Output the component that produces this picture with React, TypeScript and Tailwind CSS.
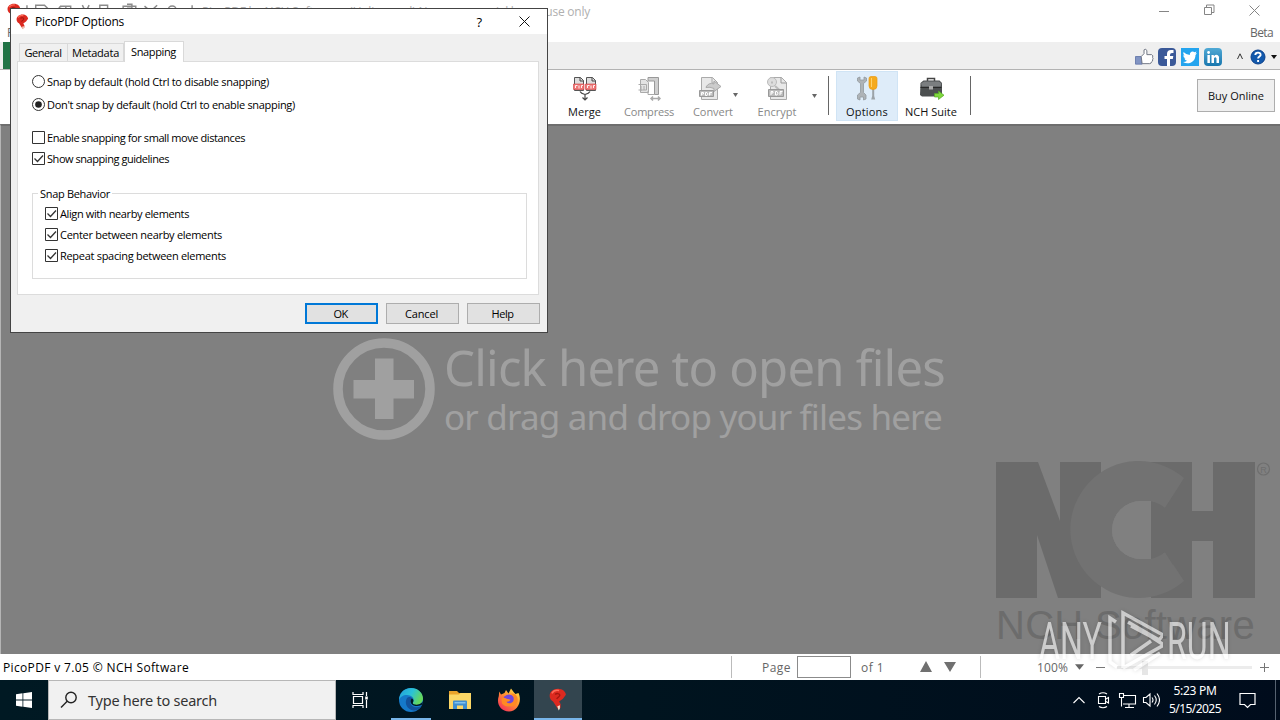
// src/App.tsx
import React, { useLayoutEffect, useRef, useState } from 'react';

interface LabelProps {
  w: number;
  className?: string;
  children: string;
}

// Single line of text, tracked so that it fills exactly `w` pixels
const Label: React.FC<LabelProps> = ({ w, className = '', children }) => {
  const ref = useRef<HTMLSpanElement>(null);
  const [spacing, setSpacing] = useState(0);

  useLayoutEffect(() => {
    if (!ref.current) return;
    const natural = ref.current.getBoundingClientRect().width;
    setSpacing((w - natural) / children.length);
  }, [w, children]);

  return (
    <span className={`block shrink-0 whitespace-pre ${className}`} style={{ width: w }}>
      <span ref={ref} className="inline-block" style={{ letterSpacing: spacing }}>
        {children}
      </span>
    </span>
  );
};

const PicoLogo: React.FC<{ className?: string }> = ({ className }) => (
  <svg viewBox="0 0 16 20" className={className}>
    <path d="M8 .5C3.600.5.6 3.200.6 6.800c0 2.200 1.200 3.900 3 4.900l2.600 4 1.800 2.800 2.200-1 .2-3.200-1.400-2.500 3.400-2.500 2.600-3.500C14.800 3 12 .5 8 .5z" fill="#dc2a20" />
    <path d="M5.500 5.500c1.200-1.200 3.900-.9 4.100.6.1 1.300-1.700 1.900-2.800 3.400" fill="none" stroke="#a5170f" strokeWidth="1.300" />
    <path d="M2.500 4.500C4 2 7 1.500 9 2" fill="none" stroke="#ff6a58" strokeWidth="1.400" />
    <path d="M7.400 16l2.400-.8-.2 3-1 1.600z" fill="#f4e2cf" />
  </svg>
);

const TitleBar = () => (
  <div className="flex h-6 shrink-0 items-start justify-between bg-white">
    <div className="flex h-6 items-center pl-[7px] text-[#858585]">
      <PicoLogo className="mr-[5px] h-[18px] w-[14px]" />
      <svg viewBox="0 0 175 20" className="h-5 w-[170px]" fill="none" stroke="#8b8b8b" strokeWidth="1.500">
        <path d="M1 3v14M10 7V3h9l4 4v10H10zM35 4h11v13M41 4v13M37 4c-4 0-4 6 0 6h4M58 3l7 14M65 3l-7 14M76 3h8v11h-8zM81 7h8v10h-8M100 4h13v13h-13zM104 2h5v4h-5M122 4l14 12M135 3l-13 12M146 9c0-7 9-7 9 0s-9 7-9 0M154 13l4 4M171 3v14" />
      </svg>
      <Label w={388} className="ml-[6px] text-[12px] text-[#b0b0b0]">
        PicoPDF by NCH Software - (Unlicensed) Non-commercial home use only
      </Label>
    </div>
    <svg viewBox="0 0 110 22" className="mr-[13px] h-[22px] w-[110px]" fill="none" stroke="#858585" strokeWidth="1">
      <path d="M2 11.500h10M47.500 7.500h7v7h-7zM49.500 7v-2h7.500v7.500h-2M92.500 5.500l10 10M102.500 5.500l-10 10" />
    </svg>
  </div>
);

const SocialBar = () => (
  <div className="flex h-7 shrink-0 items-center border-b border-[#b3b3b3] bg-[#efefef] pl-[3px]">
    <div className="h-full w-[62px] bg-[#217346]" />
    <div className="mt-[2px] ml-auto flex items-center">
      <svg viewBox="0 0 20 20" className="mr-[4px] h-5 w-[19px]">
        <path d="M.5 9.500h7v8h-7z" fill="#8194c3" stroke="#687bac" />
        <path d="M6.500 9.500l3-3V2.500q2-2 3 1v4h5q2 1 1 3 1 1 0 2.500.500 1.500-1 2-.5 2-2 2h-8z" fill="#fff" stroke="#6c7280" />
      </svg>
      <div className="mr-[5px] h-[18px] w-[18px] rounded-sm bg-[#3b5998]">
        <svg viewBox="0 0 18 18"><path d="M9 18v-7H6.500V8H9V6q0-4 4-4h2.500v3H14q-2 0-2 2v1h3.300l-.5 3H12v7z" fill="#fff" /></svg>
      </div>
      <div className="mr-[5px] h-[18px] w-[18px] bg-[#24a4ee]">
        <svg viewBox="0 0 18 18"><path d="M2.500 4q3 3 6.300 3C8.500 3.500 12 2.500 13.500 4.300l2-.8-1 2 1.500-.3-1.500 1.800c0 7-7 10.300-12.500 7q2.500 0 4-1.200-2-.4-2.700-2.300h1.200Q2.300 9.500 2.200 7.300l1.300.3Q1.600 6 2.500 4z" fill="#fff" /></svg>
      </div>
      <div className="mr-[14px] h-[18px] w-[18px] rounded-sm bg-linear-to-b from-[#4fa9d5] to-[#1777ae]">
        <svg viewBox="0 0 18 18" fill="#fff"><circle cx="4.600" cy="4.500" r="1.400" /><path d="M3.400 7h2.500v8H3.400zM7.500 7h2.300v1.200q3.200-3 5.200.5V15h-2.500v-4.500q-1-2.500-2.500-.3V15H7.500z" /></svg>
      </div>
      <svg viewBox="0 0 8 8" className="mr-[6px] h-2 w-2" fill="none" stroke="#333"><path d="M1.500 6L4 .8 6.500 6" /></svg>
      <svg viewBox="0 0 16 16" className="h-4 w-4">
        <circle cx="8" cy="8" r="7" fill="#1259ac" stroke="#0b408b" />
        <path d="M5.300 6c.2-3.400 5.700-3 5.300 0-.3 1.600-2.500 1.500-2.500 3.600M8.100 11v2" fill="none" stroke="#fff" strokeWidth="1.900" />
      </svg>
      <svg viewBox="0 0 6 4" className="mr-[3px] ml-[5px] h-1 w-[6px]"><path d="M0 0h6L3 4z" fill="#111" /></svg>
    </div>
  </div>
);

const MergeIcon = () => (
  <svg viewBox="0 0 24 25" className="h-[25px] w-6">
    <g fill="#ddd" stroke="#555">
      <path d="M1.500 1.500h6l3 3v10h-9z" /><path d="M13.500 1.500h6l3 3v10h-9z" />
    </g>
    <path d="M7 1.500v3.500h3.500M19 1.500v3.500h3.500" fill="none" stroke="#444" />
    <path d="M.5 8h10.500v5.500H.5zM12.500 8H23v5.500H12.500z" fill="#ef7777" stroke="#cc3f42" strokeWidth=".6" />
    <path d="M2.500 12V9.500h2M6 9.500v3M8.500 12V9.500h1.500M14.500 12V9.500h2M18 9.500v3M20.500 12V9.500h1.500" fill="none" stroke="#fff" strokeWidth=".9" />
    <path d="M7 15.500q1 2 5 3 4-1 5-3M12 18.500V24M9.500 21.500L12 24l2.500-2.500" fill="none" stroke="#474747" strokeWidth="1.200" />
  </svg>
);

const CompressIcon = () => (
  <svg viewBox="0 0 24 25" className="h-[25px] w-6">
    <path d="M3.500 3.500h5l3 3v10h-8z" fill="#e3e3e3" stroke="#aaa" />
    <path d="M1.500 8.500h8V14h-8M4 10v5M7 10v4" fill="none" stroke="#aaa" />
    <path d="M11 1.500h10.500v17H17.500V5H11z" fill="#cfcfcf" stroke="#999" />
    <path d="M11 15v3.500h6.500" fill="none" stroke="#aaa" />
    <path d="M14 22.500h9M16 20.500l-2 2 2 2M21 20.500l2 2-2 2" fill="none" stroke="#aaa" strokeWidth="1.500" />
  </svg>
);

const ConvertIcon = () => (
  <svg viewBox="0 0 24 25" className="h-[25px] w-6">
    <path d="M2.500 1.500h11l5 5v17h-16z" fill="#e8e8e8" stroke="#aaa" />
    <path d="M13 1.500V7h5.500" fill="none" stroke="#aaa" />
    <path d="M7 11q3-5 8-3V5l7 5.500-7 5v-3q-4-2-8-1z" fill="#ccc" stroke="#aaa" />
    <path d="M.5 14.500h14v6H.5z" fill="#bbb" stroke="#999" />
    <path d="M2.500 19.500v-3h2v1.500h-2M6.500 16.500v3h1.500q2-1.500 0-3zM10.500 19.500v-3h2.500M10.500 18h2" fill="none" stroke="#fff" />
  </svg>
);

const EncryptIcon = () => (
  <svg viewBox="0 0 24 25" className="h-[25px] w-6">
    <path d="M4.500 1.500h11l5 5v17h-16z" fill="#e8e8e8" stroke="#aaa" />
    <path d="M15 1.500V7h5.500" fill="none" stroke="#999" />
    <circle cx="6" cy="6" r="4.500" fill="#ddd" stroke="#bbb" />
    <path d="M6 5.500v2M9 10l5 4.500" stroke="#bbb" strokeWidth="2" />
    <path d="M2.500 13.500h15v7h-15z" fill="#bbb" stroke="#999" />
    <path d="M5 19v-3.500h2V17H5M9.500 15.500V19H11q2-2 0-3.500zM14 19v-3.500h2.500M14 17h2" fill="none" stroke="#fff" />
  </svg>
);

const OptionsIcon = () => (
  <svg viewBox="0 0 24 25" className="h-[25px] w-6">
    <path d="M2.500 2v3l3 2.500v9l-3 2.500v4l2.500 1v-3h3.500v3l2.500-1v-4L8.500 16.500v-9l3-2.500V2L9 1v3H5V1z" fill="#aeb3b7" stroke="#92999e" strokeWidth=".8" />
    <path d="M17.200 13h2v7l1 3.500h-4l1-3.500z" fill="#9ca3a8" />
    <path d="M14 2.500q0-2 2-2h4q2 0 2 2V10q0 3.500-4 3.500T14 10z" fill="#f5aa1d" stroke="#e99b12" strokeWidth=".7" />
    <path d="M16.500 2v9" stroke="#ffd16b" />
  </svg>
);

const SuiteIcon = () => (
  <svg viewBox="0 0 25 25" className="h-[25px] w-[25px]">
    <path d="M8.500 5V2.500h7V5" fill="none" stroke="#444" strokeWidth="1.500" />
    <path d="M1.500 7l3-2.500h16L23 7v12l-2 1.500H3L1 19z" fill="#4c4f50" />
    <path d="M2 7.500l3-2h15l2.500 2-1 3H3z" fill="#7b7e80" />
    <path d="M1.500 11.500h21" stroke="#292929" />
    <path d="M10 10h4v3.500h-4z" fill="#aaa" />
    <path d="M15.500 17.500h4V15l5.500 4.200-5.500 4.300v-2.500h-4z" fill="#7fd83c" stroke="#55a727" strokeWidth=".7" />
  </svg>
);

interface ToolButtonProps {
  icon: React.ReactNode;
  label: string;
  labelWidth: number;
  className: string;
  disabled?: boolean;
}

const ToolButton: React.FC<ToolButtonProps> = ({ icon, label, labelWidth, className, disabled }) => (
  <div className={`flex h-[50px] flex-col items-center pt-[5px] ${className}`}>
    {icon}
    <Label w={labelWidth} className={`mt-[3px] text-[11px] leading-4 ${disabled ? 'text-[#888]' : 'text-[#111]'}`}>
      {label}
    </Label>
  </div>
);

const DropArrow = ({ className }: { className: string }) => (
  <svg viewBox="0 0 5 4" className={`h-1 w-[5px] shrink-0 ${className}`}><path d="M0 0h5L2.500 4z" fill="#666" /></svg>
);

const Toolbar = () => (
  <div className="flex h-[54px] shrink-0 items-start bg-white pt-px">
    <ToolButton icon={<MergeIcon />} label="Merge" labelWidth={33} className="ml-[553px] w-[63px]" />
    <ToolButton icon={<CompressIcon />} label="Compress" labelWidth={50} className="w-[66px]" disabled />
    <ToolButton icon={<ConvertIcon />} label="Convert" labelWidth={40} className="ml-[7px] w-[48px] [&>svg]:-ml-[4px]" disabled />
    <DropArrow className="mt-[22px] -ml-[4px]" />
    <ToolButton icon={<EncryptIcon />} label="Encrypt" labelWidth={39} className="ml-[16px] w-[46px] [&>svg]:ml-[2px]" disabled />
    <DropArrow className="mt-[23px] ml-[12px]" />
    <div className="mt-[5px] ml-[11px] h-[39px] w-px bg-[#666]" />
    <ToolButton icon={<OptionsIcon />} label="Options" labelWidth={42} className="ml-[7px] w-[62px] bg-[#deecf9] outline outline-[#d0e4f5] -outline-offset-1" />
    <ToolButton icon={<SuiteIcon />} label="NCH Suite" labelWidth={52} className="ml-[2px] w-[62px]" />
    <div className="mt-[5px] ml-[8px] h-[39px] w-px bg-[#666]" />
    <div className="mt-[8px] mr-[5px] ml-auto flex h-[33px] w-[78px] items-center justify-center border border-[#adadad] bg-[#efefef] pt-px">
      <Label w={56} className="text-[11px] text-[#111]">Buy Online</Label>
    </div>
  </div>
);

const NchLogo = () => (
  <div className="flex w-[280px] flex-col">
    <svg viewBox="0 0 280 140" className="h-[140px] w-[280px]">
      <path d="M0 2h42l22 59V2h41v136H62L41 75v63H0zM155 2h41v49h21V2h42v136h-42V81h-21v57h-41z" fill="#6b6b6b" />
      <path d="M188 18A68.500 68.500 0 1 0 188 121L169 92Q156 100 145 99A29 29 0 0 1 145 41Q156 41 169 48z" fill="#727272" />
      <path d="M155 41V99H145A29 29 0 0 1 145 41z" fill="#808080" />
      <path d="M155 41.500q8 1 14 6.500l8-12v69l-8-13q-6 5-14 7z" fill="#6b6b6b" />
      <circle cx="267.500" cy="9" r="6" fill="none" stroke="#6e6e6e" strokeWidth="1.200" />
      <text x="267.500" y="12.500" textAnchor="middle" fontSize="9" fontFamily="Liberation Sans" fill="#6e6e6e">R</text>
    </svg>
    <Label w={259} className="font-['Liberation_Sans',sans-serif] text-[40px] leading-[50px] text-[#6c6c6c]">NCH Software</Label>
  </div>
);

const Canvas = () => (
  <div className="flex h-[530px] shrink-0 flex-col border-t-2 border-l border-t-[#6e6e6e] border-l-[#b5b5b5] bg-[#808080]">
    <div className="mt-[212px] ml-[332px] flex text-[#a0a0a0]">
      <svg viewBox="0 0 102 102" className="h-[102px] w-[102px]" fill="#a0a0a0">
        <circle cx="51" cy="51" r="46" fill="none" stroke="#a0a0a0" strokeWidth="9.500" />
        <path d="M42 20.500h18.500V42H81v18.500H60.500V81H42V60.500H20.500V42H42z" />
      </svg>
      <div className="ml-[9px] font-['Noto_Sans',sans-serif]">
        <Label w={501} className="text-[49px] leading-[58px]">Click here to open files</Label>
        <Label w={498} className="text-[35px] leading-[41px]">or drag and drop your files here</Label>
      </div>
    </div>
    <div className="mt-[20px] ml-[995px]">
      <NchLogo />
    </div>
  </div>
);

const StatusBar = () => (
  <div className="flex h-[26px] shrink-0 items-center bg-white text-[12px] text-[#666]">
    <Label w={186} className="ml-[3px] pt-px text-black">PicoPDF v 7.05 © NCH Software</Label>
    <div className="ml-[542px] h-[22px] w-px bg-[#bbb]" />
    <Label w={29} className="ml-[30px] pt-px">Page</Label>
    <div className="ml-[6px] h-[22px] w-[54px] border border-[#8b8b8b]" />
    <Label w={23} className="ml-[10px] pt-px">of 1</Label>
    <svg viewBox="0 0 38 12" className="ml-[36px] h-3 w-[38px]" fill="#707070"><path d="M0 11h12L6 0zM24 1h12l-6 10z" /></svg>
    <div className="ml-[22px] h-[22px] w-px bg-[#bbb]" />
    <Label w={31} className="ml-[56px] pt-px">100%</Label>
    <svg viewBox="0 0 10 6" className="ml-[7px] h-[6px] w-[9px]"><path d="M0 0h10L5 6z" fill="#666" /></svg>
    <div className="ml-[12px] h-px w-[9px] bg-[#777]" />
    <div className="ml-[12px] h-[3px] w-[135px] bg-[#ececec]">
      <div className="-mt-[5px] ml-[25px] h-[14px] w-[6px] bg-[#e6e6e6]" />
    </div>
    <svg viewBox="0 0 9 9" className="ml-[8px] h-[9px] w-[9px]" stroke="#777"><path d="M0 4.500h9M4.500 0v9" /></svg>
  </div>
);

const EdgeIcon = () => (
  <svg viewBox="0 0 24 24" className="h-6 w-6">
    <defs>
      <linearGradient id="edgeTop" x1="0" y1="0" x2="1" y2="0.400"><stop offset="0" stopColor="#239edb" /><stop offset="0.550" stopColor="#2ac2d8" /><stop offset="1" stopColor="#65d85b" /></linearGradient>
    </defs>
    <circle cx="12" cy="12" r="12" fill="#1579c9" />
    <path d="M.2 10C1.500 3.500 6.300 0 12 0c7 0 12 5 12 10.500 0 4.500-3.800 6.700-7.500 6.500-2.500 0-3.500-1-2.500-2.500C16.500 10 12 7 8 7 4 7 1 9 .2 12z" fill="url(#edgeTop)" />
    <path d="M8 10c-3 5 0 11.500 6.500 12.500 3.500.3 6.500-1.800 8-4.500-5 2.500-10.500 1-11.200-3-.4-2 .7-3.500 2-4.500-1.500-2-4-2-5.300-.5z" fill="#12529b" />
    <path d="M13 10.600c-2.700 2-1.600 6.800 3.500 7.300 3 .4 5.300-.3 6.700-1.300l.6-3c-2 3-6.300 3.800-9 2.700-1.500-.7-1-1.600-.5-2.700.5-1.300-.2-2.400-1.300-3z" fill="#001722" />
  </svg>
);

const ExplorerIcon = () => (
  <svg viewBox="0 0 22 20" className="h-5 w-[22px]">
    <path d="M0 1h8l2 2h12v16H0z" fill="#e9a32b" />
    <path d="M0 4.500h10l1.500-1.500H22v16H0z" fill="#fbd766" />
    <path d="M4 19v-7.500q0-1 1-1h12q1 0 1 1V19h-4v-3.500H8V19z" fill="#3f8fd0" />
    <path d="M5.500 12h11v1.500h-11z" fill="#81c3ee" />
  </svg>
);

const FirefoxIcon = () => (
  <svg viewBox="0 0 24 24" className="h-6 w-6">
    <defs>
      <linearGradient id="fox" x1="1" y1="0" x2="0.200" y2="1"><stop offset="0" stopColor="#fff04b" /><stop offset="0.500" stopColor="#ff9130" /><stop offset="1" stopColor="#f5305b" /></linearGradient>
    </defs>
    <path d="M2.200 3.500L4 6.500 7.500 5l1.500-3 2.500 3.500L14 .5l3 4 1.500 1.500 3-1C25.500 13 20.500 23.500 12 23.500S-1 15.500 1.800 8z" fill="url(#fox)" />
    <circle cx="12" cy="12.500" r="6" fill="#7046dc" />
    <path d="M4.500 11c2-2.500 4-1 6 0l3 .7q-1 2-4 2 1 2 4 1.500 4-1 3-6-1.500-3.500-4-3.200 6-1.800 8 4 1 6-4 8-7 2.500-11.500-2.500z" fill="#ff8a24" />
  </svg>
);

const WindowsIcon = () => (
  <svg viewBox="0 0 16 16" className="h-4 w-4" fill="#fff">
    <path d="M0 2.200l6.500-.9v6.200H0zM7.300 1.200L16 0v7.500H7.300zM0 8.400h6.500v6.300L0 13.800zM7.300 8.400H16V16l-8.700-1.200z" />
  </svg>
);

const Taskbar = () => (
  <div className="flex h-10 shrink-0 items-center bg-linear-to-r from-[#001923] via-[#00141f] to-[#000c1c] text-white">
    <div className="flex w-12 justify-center"><WindowsIcon /></div>
    <div className="flex h-10 w-72 items-center border border-[#b7b7b7] bg-[#f1f1f1] pl-[11px] text-[#333]">
      <svg viewBox="0 0 18 18" className="h-[18px] w-[18px]" fill="none" stroke="#222" strokeWidth="1.400"><circle cx="11" cy="6.500" r="5.200" /><path d="M7.200 10.300L1 16.500" /></svg>
      <Label w={129} className="ml-[10px] pt-[2px] font-['Noto_Sans',sans-serif] text-[14.500px]">Type here to search</Label>
    </div>
    <div className="flex w-12 justify-center">
      <svg viewBox="0 0 17 16" className="h-4 w-[17px]" fill="none" stroke="#fff" strokeWidth="1.200"><path d="M1 0v2.500h10V0M1 16v-2.500h10V16M1.500 4.500h9v7h-9zM14.500 0v4M14.500 8v8" /><path d="M13.200 4.500h2.600v3h-2.600z" fill="#fff" stroke="none" /></svg>
    </div>
    <div className="ml-[7px] flex h-10 w-10 items-center justify-center border-b-2 border-[#78b5e9] pt-[2px]"><EdgeIcon /></div>
    <div className="ml-[8px] flex w-10 items-center justify-center pl-[2px]"><ExplorerIcon /></div>
    <div className="ml-[10px] flex w-10 items-center justify-center"><FirefoxIcon /></div>
    <div className="ml-[5px] flex h-10 w-12 items-center justify-center border-b-2 border-[#78b5e9] bg-[#33454f]"><PicoLogo className="h-[23px] w-[18px]" /></div>
    <div className="ml-auto flex h-10 items-center">
      <svg viewBox="0 0 88 18" className="h-[18px] w-[88px]" fill="none" stroke="#fff" strokeWidth="1.100">
        <path d="M1.500 12L7 6.500l5.500 5.500" />
        <path d="M26.500 5.500h7v7h-7zM34 8l2.500-1.500v5.500L34 10.500M27 3q4-2.500 8 0M27 15.500q4 2.500 8 0" />
        <path d="M51.500 4.500h12v8.500H51M57 13v3M53 16.500h9M47.500 2.500h4v4h-4zM49.500 6.500v9" />
        <path d="M71.500 6.500H74l4-3.500v12l-4-3.500h-2.500zM80 6.500q2 2.500 0 5M82.500 4.500q3.500 4.500 0 9M85 2.500q5 6.500 0 13" />
      </svg>
      <div className="ml-[9px] flex w-[52px] flex-col items-center font-['Noto_Sans',sans-serif] text-[12px] leading-[18px]">
        <Label w={43}>5:23 PM</Label>
        <Label w={52}>5/15/2025</Label>
      </div>
      <svg viewBox="0 0 17 17" className="ml-[18px] h-[17px] w-[17px]" fill="none" stroke="#fff" strokeWidth="1.200"><path d="M1 1.500h15v11h-4.500l-3 3-3-3H1z" /></svg>
      <div className="mr-[4px] ml-[19px] h-10 w-px bg-[#566270]" />
    </div>
  </div>
);

const CheckItem: React.FC<{ w: number; label: string; checked?: boolean }> = ({ w, label, checked }) => (
  <div className="flex h-[21px] items-center">
    <svg viewBox="0 0 13 13" className="mr-[2px] h-[13px] w-[13px]" fill="none" stroke="#333">
      <path d="M.5 .5h12v12H.5z" />
      {checked && <path d="M2.500 6.500l3 3 5.500-6" strokeWidth="1.300" />}
    </svg>
    <Label w={w}>{label}</Label>
  </div>
);

const RadioItem: React.FC<{ w: number; label: string; checked?: boolean }> = ({ w, label, checked }) => (
  <div className="flex h-[23px] items-center">
    <svg viewBox="0 0 13 13" className="mr-[2px] h-[13px] w-[13px]">
      <circle cx="6.500" cy="6.500" r="6" fill="none" stroke="#333" />
      {checked && <circle cx="6.500" cy="6.500" r="3.300" fill="#222" />}
    </svg>
    <Label w={w}>{label}</Label>
  </div>
);

const dialogButton = 'flex h-[21px] w-[73px] items-center justify-center bg-[#e1e1e1] pr-[2px]';

const OptionsDialog = () => (
  <div className="absolute top-2 left-[10px] flex h-[325px] w-[538px] flex-col border border-[#444] bg-[#f0f0f0] text-[11px] leading-4 text-black">
    <div className="flex h-[25px] shrink-0 items-center bg-white pl-[5px]">
      <PicoLogo className="h-[16px] w-[13px]" />
      <Label w={89} className="ml-[6px] text-[12px]">PicoPDF Options</Label>
      <span className="ml-auto text-[13px] font-medium">?</span>
      <svg viewBox="0 0 11 11" className="mr-[17px] ml-[37px] h-[11px] w-[11px]" stroke="#111"><path d="M.5 .5l10 10M10.500 .5l-10 10" /></svg>
    </div>
    <div className="mt-[7px] flex h-5 shrink-0 items-end pl-[8px]">
      <div className="flex h-[18px] w-[49px] items-center justify-center border border-b-0 border-[#d9d9d9] pr-px"><Label w={37}>General</Label></div>
      <div className="flex h-[18px] w-[56px] items-center justify-center border border-b-0 border-l-0 border-[#d9d9d9]"><Label w={47}>Metadata</Label></div>
      <div className="relative z-10 -mb-px flex h-[21px] w-[60px] items-center border border-b-0 border-[#d9d9d9] bg-white pb-px pl-[6px]"><Label w={45}>Snapping</Label></div>
    </div>
    <div className="ml-[6px] h-[234px] w-[522px] shrink-0 border border-[#dcdcdc] bg-white pt-[8px] pl-[14px]">
      <RadioItem w={222} label="Snap by default (hold Ctrl to disable snapping)" />
      <RadioItem w={248} label="Don't snap by default (hold Ctrl to enable snapping)" checked />
      <div className="mt-[11px]">
        <CheckItem w={198} label="Enable snapping for small move distances" />
        <CheckItem w={122} label="Show snapping guidelines" checked />
      </div>
      <fieldset className="mt-[16px] h-[94px] w-[495px] border border-[#dcdcdc] pl-[12px]">
        <legend className="-ml-[7px] px-[2px]"><Label w={70} className="translate-y-px">Snap Behavior</Label></legend>
        <div className="mt-[2px]">
          <CheckItem w={129} label="Align with nearby elements" checked />
          <CheckItem w={162} label="Center between nearby elements" checked />
          <CheckItem w={166} label="Repeat spacing between elements" checked />
        </div>
      </fieldset>
    </div>
    <div className="mt-[8px] mr-[7px] flex justify-end gap-[8px]">
      <div className={`${dialogButton} border-2 border-[#0078d7]`}><Label w={14}>OK</Label></div>
      <div className={`${dialogButton} border border-[#adadad]`}><Label w={33}>Cancel</Label></div>
      <div className={`${dialogButton} border border-[#adadad]`}><Label w={22}>Help</Label></div>
    </div>
  </div>
);

const Watermark = () => (
  <div className="absolute top-[608px] left-[1039px] flex h-[66px] w-[196px] items-center text-white opacity-60 drop-shadow-[0_0_2px_rgba(0,0,0,0.25)]">
    <span className="w-[64px] font-['Roboto',sans-serif] text-[51px] leading-none">
      <span className="inline-block origin-left scale-x-[0.63]">ANY</span>
    </span>
    <svg viewBox="0 0 60 66" className="h-[66px] w-[60px]" fill="none" stroke="#fff" strokeWidth="3.500">
      <path d="M13 14l-6-4v44l7 5M20 60V5l40 22-4 5-31-18M20 60l41-23-14-9-19-10M28 47l20-14M31 62l26-17" />
    </svg>
    <span className="ml-[4px] w-[64px] font-['Roboto',sans-serif] text-[51px] leading-none">
      <span className="inline-block origin-left scale-x-[0.63]">RUN</span>
    </span>
  </div>
);

const App: React.FC = () => {
  return (
    <div className="relative flex h-[720px] w-[1280px] flex-col overflow-hidden bg-white font-['Open_Sans','Noto_Sans',sans-serif]">
      <TitleBar />
      <div className="flex h-[18px] shrink-0 items-center justify-between pr-[7px] pl-[7px] text-[12px] text-[#666]">
        <span>File</span>
        <Label w={23}>Beta</Label>
      </div>
      <SocialBar />
      <Toolbar />
      <Canvas />
      <StatusBar />
      <Taskbar />
      <OptionsDialog />
      <Watermark />
    </div>
  );
};

export default App;
